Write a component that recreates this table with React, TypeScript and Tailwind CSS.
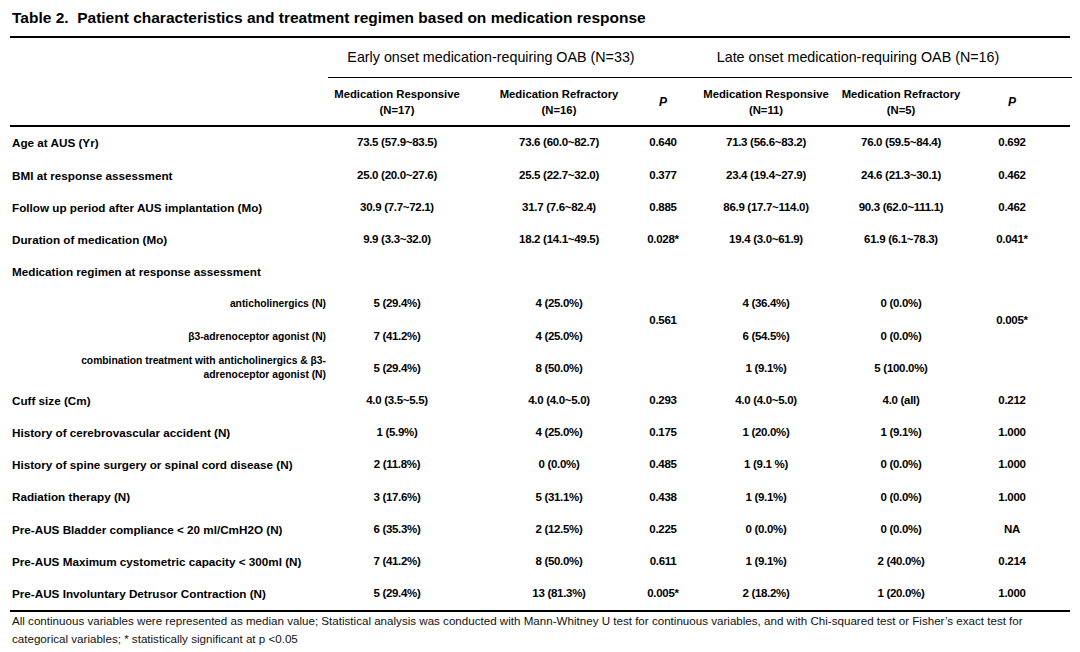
const grid = "grid grid-cols-[318px_150px_133px_104px_119px_123px_115px]";

// per-column nudges so the centred text lands where the reference has it
const colPad = ["", "pr-[12px]", "pl-[29px]", "", "pr-[17px]", "pl-[11px]", "pr-[5px]"];

type Row = [string, string, string, string, string, string, string];

const topRows: Row[] = [
  ["Age at AUS (Yr)", "73.5 (57.9~83.5)", "73.6 (60.0~82.7)", "0.640", "71.3 (56.6~83.2)", "76.0 (59.5~84.4)", "0.692"],
  ["BMI at response assessment", "25.0 (20.0~27.6)", "25.5 (22.7~32.0)", "0.377", "23.4 (19.4~27.9)", "24.6 (21.3~30.1)", "0.462"],
  ["Follow up period after AUS implantation (Mo)", "30.9 (7.7~72.1)", "31.7 (7.6~82.4)", "0.885", "86.9 (17.7~114.0)", "90.3 (62.0~111.1)", "0.462"],
  ["Duration of medication (Mo)", "9.9 (3.3~32.0)", "18.2 (14.1~49.5)", "0.028*", "19.4 (3.0~61.9)", "61.9 (6.1~78.3)", "0.041*"],
];

const bottomRows: Row[] = [
  ["Cuff size (Cm)", "4.0 (3.5~5.5)", "4.0 (4.0~5.0)", "0.293", "4.0 (4.0~5.0)", "4.0 (all)", "0.212"],
  ["History of cerebrovascular accident (N)", "1 (5.9%)", "4 (25.0%)", "0.175", "1 (20.0%)", "1 (9.1%)", "1.000"],
  ["History of spine surgery or spinal cord disease (N)", "2 (11.8%)", "0 (0.0%)", "0.485", "1 (9.1 %)", "0 (0.0%)", "1.000"],
  ["Radiation therapy (N)", "3 (17.6%)", "5 (31.1%)", "0.438", "1 (9.1%)", "0 (0.0%)", "1.000"],
  ["Pre-AUS Bladder compliance < 20 ml/CmH2O (N)", "6 (35.3%)", "2 (12.5%)", "0.225", "0 (0.0%)", "0 (0.0%)", "NA"],
  ["Pre-AUS Maximum cystometric capacity < 300ml (N)", "7 (41.2%)", "8 (50.0%)", "0.611", "1 (9.1%)", "2 (40.0%)", "0.214"],
  ["Pre-AUS Involuntary Detrusor Contraction (N)", "5 (29.4%)", "13 (81.3%)", "0.005*", "2 (18.2%)", "1 (20.0%)", "1.000"],
];

function DataRow({ row }: { row: Row }) {
  return (
    <div className={`${grid} h-[32.2px] items-center`}>
      <div className="pl-[2px] text-[11.7px] font-bold whitespace-nowrap">{row[0]}</div>
      {row.slice(1).map((v, i) => (
        <div key={i} className={`text-center text-[11.5px] tracking-[-0.3px] font-bold whitespace-nowrap ${colPad[i + 1]}`}>
          {v}
        </div>
      ))}
    </div>
  );
}

function Cell({ children, col, className = "" }: { children: React.ReactNode; col: number; className?: string }) {
  return (
    <div className={`flex items-center justify-center text-center font-bold whitespace-nowrap ${colPad[col]} ${className}`}>
      {children}
    </div>
  );
}

export default function App() {
  return (
    <div className="w-[1080px] h-[652px] bg-white px-[10px] text-black font-['Liberation_Sans',Arial,sans-serif] overflow-hidden">
      <div className="h-[36px] flex items-center pl-[2px] text-[15.5px] font-bold whitespace-pre">
        Table 2.  Patient characteristics and treatment regimen based on medication response
      </div>
      <div className="h-[2px] bg-black" />

      {/* group headers */}
      <div className="grid grid-cols-[318px_387px_357px] h-[39px] items-center text-[14.3px]">
        <div />
        <div className="text-center pr-[61px] whitespace-nowrap">Early onset medication-requiring OAB (N=33)</div>
        <div className="text-center pr-[71px] whitespace-nowrap">Late onset medication-requiring OAB (N=16)</div>
      </div>
      <div className="grid grid-cols-[318px_744px]">
        <div />
        <div className="h-px bg-black" />
      </div>

      {/* sub headers */}
      <div className={`${grid} h-[47px] items-center text-[11.3px] font-bold leading-[16px]`}>
        <div />
        <Cell col={1} className="flex-col">
          <span>Medication Responsive</span>
          <span>(N=17)</span>
        </Cell>
        <Cell col={2} className="flex-col">
          <span>Medication Refractory</span>
          <span>(N=16)</span>
        </Cell>
        <Cell col={3}>
          <span className="italic text-[12px]">P</span>
        </Cell>
        <Cell col={4} className="flex-col">
          <span>Medication Responsive</span>
          <span>(N=11)</span>
        </Cell>
        <Cell col={5} className="flex-col">
          <span>Medication Refractory</span>
          <span>(N=5)</span>
        </Cell>
        <Cell col={6}>
          <span className="italic text-[12px]">P</span>
        </Cell>
      </div>
      <div className="h-[2px] bg-black" />

      {topRows.map((r, i) => (
        <DataRow key={i} row={r} />
      ))}

      <div className="h-[32.2px] flex items-center pl-[2px] text-[11.7px] font-bold">
        Medication regimen at response assessment
      </div>

      {/* regimen block: P values span the first two lines */}
      <div className={`${grid} grid-rows-[32.2px_32.2px_32.2px] text-[11.5px] tracking-[-0.3px]`}>
        <div className="flex items-center justify-end pr-[2px] text-[10.3px] tracking-normal font-bold">anticholinergics (N)</div>
        <Cell col={1}>5 (29.4%)</Cell>
        <Cell col={2}>4 (25.0%)</Cell>
        <Cell col={3} className="row-span-2">0.561</Cell>
        <Cell col={4}>4 (36.4%)</Cell>
        <Cell col={5}>0 (0.0%)</Cell>
        <Cell col={6} className="row-span-2">0.005*</Cell>

        <div className="flex items-center justify-end pr-[2px] text-[10.3px] tracking-normal font-bold">β3-adrenoceptor agonist (N)</div>
        <Cell col={1}>7 (41.2%)</Cell>
        <Cell col={2}>4 (25.0%)</Cell>
        <Cell col={4}>6 (54.5%)</Cell>
        <Cell col={5}>0 (0.0%)</Cell>

        <div className="flex items-center justify-end pr-[2px] text-right text-[10.3px] tracking-normal font-bold leading-[14.5px]">
          <span>
            combination treatment with anticholinergics &amp; β3-
            <br />
            adrenoceptor agonist (N)
          </span>
        </div>
        <Cell col={1}>5 (29.4%)</Cell>
        <Cell col={2}>8 (50.0%)</Cell>
        <div />
        <Cell col={4}>1 (9.1%)</Cell>
        <Cell col={5}>5 (100.0%)</Cell>
        <div />
      </div>

      {bottomRows.map((r, i) => (
        <DataRow key={i} row={r} />
      ))}

      <div className="h-[2px] bg-black" />
      <p className="pl-[2px] text-[11.6px] leading-[18px] text-[#111]">
        All continuous variables were represented as median value; Statistical analysis was conducted with Mann-Whitney U test for continuous variables, and with Chi-squared test or Fisher’s exact test for categorical variables; * statistically significant at p &lt;0.05
      </p>
    </div>
  );
}
